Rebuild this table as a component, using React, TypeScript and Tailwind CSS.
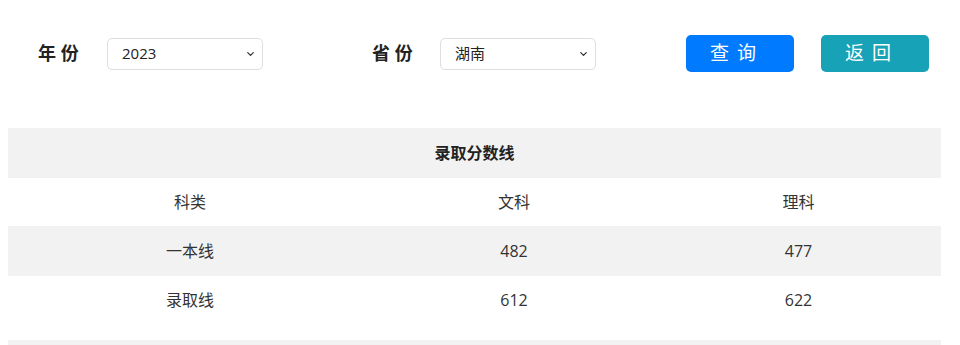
import { ChevronDown } from 'lucide-react';

type Row = { label: string; wen: string; li: string };

const rows: Row[] = [
  { label: '一本线', wen: '482', li: '477' },
  { label: '录取线', wen: '612', li: '622' },
];

function Picker({ value, options }: { value: string; options: string[] }) {
  return (
    <div className="relative w-[156px] h-[32px]">
      <select
        defaultValue={value}
        className="appearance-none w-full h-full border border-[#dedede] rounded-[5px] bg-white pl-[14px] pr-8 text-[15px] text-[#222] outline-none"
      >
        {options.map((o) => (
          <option key={o}>{o}</option>
        ))}
      </select>
      <ChevronDown
        size={11}
        strokeWidth={2.75}
        className="pointer-events-none absolute right-[7px] top-1/2 -translate-y-1/2 text-[#333]"
      />
    </div>
  );
}

export default function App() {
  return (
    <div className="w-[960px] h-[345px] overflow-hidden bg-white text-[#333] font-['Open_Sans','Noto_Sans_CJK_SC',sans-serif]">
      {/* Filters */}
      <div className="flex items-center h-[37px] mt-[35px]">
        <span className="ml-[38px] w-[42px] text-[18px] font-bold text-[#222] whitespace-nowrap">年 份</span>
        <div className="ml-[27px]">
          <Picker value="2023" options={['2023', '2022', '2021']} />
        </div>
        <span className="ml-[109px] w-[41px] text-[18px] font-bold text-[#222] whitespace-nowrap">省 份</span>
        <div className="ml-[27px]">
          <Picker value="湖南" options={['湖南', '湖北', '广东']} />
        </div>
        <button className="ml-[90px] w-[108px] h-[37px] rounded-[5px] bg-[#007bff] text-white text-[19px] tracking-[8px] pr-[6px]">
          查询
        </button>
        <button className="ml-[27px] w-[108px] h-[37px] rounded-[5px] bg-[#17a2b8] text-white text-[19px] tracking-[8px] pr-[6px]">
          返回
        </button>
      </div>

      {/* Table */}
      <div className="ml-[8px] mt-[56px] w-[933px] text-[16px]">
        <div className="h-[50px] bg-[#f2f2f2] flex items-center justify-center font-bold text-[#222]">
          录取分数线
        </div>
        <div className="grid grid-cols-[364px_284px_1fr] h-[48px] items-center text-center">
          <span>科类</span>
          <span>文科</span>
          <span>理科</span>
        </div>
        {rows.map((r, i) => (
          <div
            key={r.label}
            className={`grid grid-cols-[364px_284px_1fr] items-center text-center ${
              i % 2 === 0 ? 'h-[50px] bg-[#f2f2f2]' : 'h-[48px] bg-white'
            }`}
          >
            <span>{r.label}</span>
            <span>{r.wen}</span>
            <span>{r.li}</span>
          </div>
        ))}
        <div className="h-[16px]" />
        <div className="h-[10px] bg-[#f2f2f2]" />
      </div>
    </div>
  );
}
